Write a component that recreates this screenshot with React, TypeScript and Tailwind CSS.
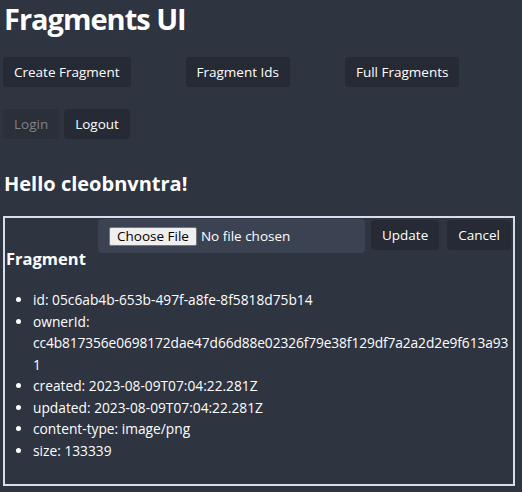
import { useState } from 'react'

const fragment = {
  id: '05c6ab4b-653b-497f-a8fe-8f5818d75b14',
  ownerId: 'cc4b817356e0698172dae47d66d88e02326f79e38f129df7a2a2d2e9f613a931',
  created: '2023-08-09T07:04:22.281Z',
  updated: '2023-08-09T07:04:22.281Z',
  type: 'image/png',
  size: 133339,
}

const btn = 'h-[30px] rounded-[4px] bg-[#252a34] px-[11px]'

export default function App() {
  const [fileName] = useState<string | null>(null)

  return (
    <div className="min-h-screen bg-[#2e3440] px-[4px] text-[13.5px] text-white [font-family:'Open_Sans',sans-serif]">
      <h1 className="text-[29px] font-bold leading-[38px] tracking-[-1px]">Fragments UI</h1>

      <div className="mt-[19px] flex gap-[55px]">
        <button className={`${btn} -ml-[1px]`}>Create Fragment</button>
        <button className={btn}>Fragment Ids</button>
        <button className={btn}>Full Fragments</button>
      </div>

      <div className="mt-[22px] flex gap-[5px]">
        <button disabled className="-ml-[1px] h-[30px] rounded-[4px] bg-[#2a2f39] px-[11px] text-[#7d828b]">
          Login
        </button>
        <button className={btn}>Logout</button>
      </div>

      <h2 className="mt-[31px] text-[20px] font-bold leading-[28px]">Hello cleobnvntra!</h2>

      <div className="mt-[18px] -ml-[1px] w-[512px] border-2 border-[#d8dee9] pb-[23px]">
        <div className="flex items-start justify-end pr-[2px] pt-[1px]">
          <div className="flex h-[34px] w-[267px] items-center rounded-[4px] bg-[#3b4252] px-[11px]">
            <span className="rounded-[2px] border border-[#767676] bg-[#efefef] px-[7px] text-[13.5px] leading-[17px] text-black">
              Choose File
            </span>
            <span className="ml-[4px] text-[13.5px]">{fileName ?? 'No file chosen'}</span>
          </div>
          <button className={`${btn} ml-[6px] mt-[1px]`}>Update</button>
          <button className={`${btn} ml-[8px] mt-[1px]`}>Cancel</button>
        </div>

        <h3 className="-mt-[6px] pl-[1px] text-[16.5px] font-bold leading-[24px]">Fragment</h3>

        <ul className="mt-[18px] list-disc pl-[28px] text-[13.75px] leading-[21.5px]">
          <li>id: {fragment.id}</li>
          <li className="break-all">
            ownerId:
            <br />
            <span className="tracking-[-0.1px]">{fragment.ownerId}</span>
          </li>
          <li>created: {fragment.created}</li>
          <li>updated: {fragment.updated}</li>
          <li>content-type: {fragment.type}</li>
          <li>size: {fragment.size}</li>
        </ul>
      </div>
    </div>
  )
}
